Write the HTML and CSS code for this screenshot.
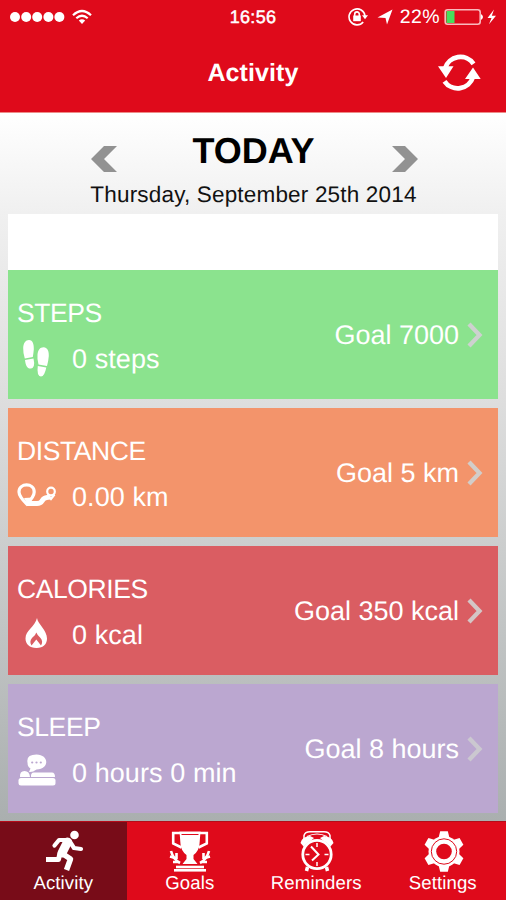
FILE: index.html
```html
<!DOCTYPE html>
<html lang="en">
<head>
<meta charset="utf-8">
<title>Activity</title>
<link rel="stylesheet" href="styles.css">
</head>
<body>
<div class="app">
  <header class="header">
    <div class="status">
      <div class="status-side">
        <svg width="84" height="20" viewBox="0 0 84 20" fill="#fff">
          <circle cx="15" cy="10" r="5"/><circle cx="26.2" cy="10" r="5"/><circle cx="37.2" cy="10" r="5"/><circle cx="48.4" cy="10" r="5"/><circle cx="59.4" cy="10" r="5"/>
        </svg>
        <svg class="wifi" width="20" height="16" viewBox="0 0 20 16" fill="none" stroke="#fff" stroke-width="2.2">
          <path d="M1 6.2Q10 -2.2 19 6.2M4.3 9.3Q10 4.2 15.7 9.3"/><path d="M6.8 11.6Q10 9 13.2 11.6L10 15Z" fill="#fff" stroke="none"/>
        </svg>
      </div>
      <span class="time">16:56</span>
      <div class="status-side right">
        <svg width="20" height="20" viewBox="0 0 20 20" fill="none" stroke="#fff" stroke-width="1.6">
          <path d="M15.2 15A8 8 0 1 1 17 9"/><path d="M14 8.3h6l-3 4z" fill="#fff" stroke="none"/><rect x="5.2" y="8.5" width="7.6" height="5.7" fill="#fff" stroke="none"/><path d="M6.7 9V7.2a2.3 2.3 0 0 1 4.6 0V9"/>
        </svg>
        <svg class="locate" width="16" height="16" viewBox="0 0 16 16" fill="#fff"><path d="M15.5 .5 10 15.5 8.5 9 .5 8.5Z"/></svg>
        <span class="percent">22%</span>
        <svg class="battery" width="54" height="18" viewBox="0 0 54 18">
          <rect x="1.2" y="1.7" width="35" height="14.5" rx="2.5" fill="none" stroke="#f9b9bd" stroke-width="1.6"/>
          <rect x="2.5" y="3" width="8" height="12" fill="#46df5c"/><path d="M37 6q4 3 0 6z" fill="#fff"/>
          <path d="M50 1.5 43.5 10h4L45 16.3 52 7.7h-4.2z" fill="#fff"/>
        </svg>
      </div>
    </div>
    <div class="navbar">
      <h1 class="title">Activity</h1>
      <svg class="refresh" width="44" height="40" viewBox="0 0 44 40">
        <path d="M36.5 10.8A16 16 0 0 0 8 15.5M7.5 28.3A16 16 0 0 0 36 24" fill="none" stroke="#fff" stroke-width="4.7"/>
        <path d="M1 13.2h15.5L9 25zM28 26h15.7L36 14.5z" fill="#fff"/>
      </svg>
    </div>
  </header>

  <main class="content">
    <section class="day">
      <svg class="arrow" width="26" height="26" viewBox="0 0 26 26"><path d="M13 0h13L13 13l13 13H13L0 13z" fill="#929292"/></svg>
      <div class="today">TODAY</div>
      <svg class="arrow" width="26" height="26" viewBox="0 0 26 26"><path d="M13 0H0l13 13L0 26h13l13-13z" fill="#929292"/></svg>
      <div class="date">Thursday, September 25th 2014</div>
    </section>
    <div class="blank"></div>
    <section class="cards">
      <article class="card steps">
        <div>
          <h2 class="name">STEPS</h2>
          <div class="reading">
            <svg width="40" height="40" viewBox="0 0 40 40" fill="#fff">
              <path d="M12 1C16 1 17 6 16.8 10.5Q16.5 14 15.8 18L7.8 19.5Q6 14 6.2 9C6.4 4 8.5 1 12 1ZM8 21l8.500-1.500Q18.500 28.500 14 29.500C10.500 30 8.500 26.500 8 21Z"/>
              <path d="M26.5 8.2C31 8.500 32 13 31.8 17Q31.5 21.5 30 27L21.5 25.5Q20 20 20.5 15.5C21 11 23 8.2 26.5 8.2ZM20.8 27l8.500 1.500Q27.500 37.500 24 37.500 19.500 37 20.800 27Z"/>
            </svg>
            <span>0 steps</span>
          </div>
        </div>
        <div class="goal">Goal 7000<svg width="16" height="26" viewBox="0 0 16 26"><path d="M2 2 12.5 13 2 24" fill="none" stroke="#cdd1cf" stroke-width="4.3"/></svg></div>
      </article>
      <article class="card distance">
        <div>
          <h2 class="name">DISTANCE</h2>
          <div class="reading">
            <svg width="40" height="40" viewBox="0 0 40 40" fill="none" stroke="#fff">
              <path d="M9.8 27Q2 19.500 2 15C2 5.500 17.200 5.500 17.200 15Q17.200 19.500 9.800 27Z" stroke-width="3.2"/>
              <path d="M7 21 11 28 16 20.500Z" fill="#fff" stroke="none"/>
              <path d="M10 26.500H20Q23.500 26.500 25 24L26.500 22Q28 20.500 33 20" stroke-width="5"/>
              <circle cx="34" cy="14.500" r="3.800" stroke-width="2.2"/><path d="M30.500 17.500 34 22l3.500-4.500" stroke-width="2.200"/>
            </svg>
            <span>0.00 km</span>
          </div>
        </div>
        <div class="goal">Goal 5 km<svg width="16" height="26" viewBox="0 0 16 26"><path d="M2 2 12.5 13 2 24" fill="none" stroke="#d2cdc9" stroke-width="4.3"/></svg></div>
      </article>
      <article class="card calories">
        <div>
          <h2 class="name">CALORIES</h2>
          <div class="reading">
            <svg width="40" height="40" viewBox="0 0 40 40">
              <path d="M20 3C21 9.500 30 15 30 23.500 30 29 26.500 33 19.500 33S8.500 29 8.500 23.500C8.500 15 18 12 20 3Z" fill="#fff"/>
              <path d="M19.300 17.500Q20.500 20.500 23.500 23 26.500 26.500 24 30.500L19.300 24.500 14.500 30.500Q12 26.500 15 23 18.500 20.500 19.300 17.500Z" fill="#da5d62"/>
            </svg>
            <span>0 kcal</span>
          </div>
        </div>
        <div class="goal">Goal 350 kcal<svg width="16" height="26" viewBox="0 0 16 26"><path d="M2 2 12.5 13 2 24" fill="none" stroke="#d4c6c6" stroke-width="4.3"/></svg></div>
      </article>
      <article class="card sleep">
        <div>
          <h2 class="name">SLEEP</h2>
          <div class="reading">
            <svg width="40" height="40" viewBox="0 1.500 40 40" fill="#fff">
              <path d="M10.500 11Q9 3 19.500 3C32 3 33 17.500 19.500 18Q15.500 21 12 20.500L13.500 17Q10.500 15.500 10.500 11Z"/>
              <path d="M3 25.500Q2.500 19.500 7.500 19.500 12.500 19.500 13 25.500zM14 25.500Q13.500 21 17 21H35Q38 21 38 25.500z"/>
              <rect x="1.500" y="26.500" width="37" height="7.500" rx="2.500"/>
              <g fill="#bba7d0"><circle cx="15.200" cy="11" r="1.100"/><circle cx="19.500" cy="11" r="1.100"/><circle cx="23.800" cy="11" r="1.100"/></g>
            </svg>
            <span>0 hours 0 min</span>
          </div>
        </div>
        <div class="goal">Goal 8 hours<svg width="16" height="26" viewBox="0 0 16 26"><path d="M2 2 12.5 13 2 24" fill="none" stroke="#cbc8d0" stroke-width="4.3"/></svg></div>
      </article>
    </section>
  </main>

  <nav class="tabs">
    <a class="tab active">
      <svg width="44" height="44" viewBox="-1.5 0 44 44" fill="none" stroke="#fff" stroke-linejoin="round">
        <circle cx="32" cy="6" r="4.3" fill="#fff" stroke="none"/>
        <path d="M12 16.5 16.5 11 24.5 11" stroke-width="4.2" stroke-linecap="round"/>
        <path d="M25 13 19.5 24" stroke-width="9" stroke-linecap="round"/>
        <path d="M27 12 31.5 19 38.500 20" stroke-width="4.200" stroke-linecap="round"/>
        <path d="M17.500 24 16 30.500H3.500" stroke-width="5"/>
        <path d="M20.500 25 28 30 24 41" stroke-width="5.500"/>
      </svg>
      <span>Activity</span>
    </a>
    <a class="tab">
      <svg width="44" height="44" viewBox="0 0 44 44" fill="none" stroke="#fff">
        <path d="M11.500 2.500H32.500L31.500 15Q31 22 25.500 26V30L29.500 35H14.500L18.500 30V26Q13 22 12.500 15Z" fill="#fff" stroke="none"/>
        <path d="M13.500 5.500H30.500" stroke="#df0a1b" stroke-width="1"/>
        <path d="M12 4H5.200V14.500L13.500 18.500M32 4h6.800V14.500L30.500 18.500" stroke-width="2.600"/>
        <path d="M8 38H36" stroke-width="2.600"/><path d="M6 41.300H38" stroke-width="2.600"/>
        <path d="M3 22Q5 30 12 34M41 22Q39 30 32 34" stroke-width="2.600"/>
        <path d="M2 27.500 7 29M5 33 10 33M8.500 24 8.500 30M42 27.500 37 29M39 33 34 33M35.500 24V30" stroke-width="2.600"/>
      </svg>
      <span>Goals</span>
    </a>
    <a class="tab">
      <svg width="44" height="44" viewBox="-1 0 44 44" fill="none" stroke="#fff">
        <path d="M9 10V6.500Q10 2.800 15 2.800H29Q34 2.800 35 6.500V10" stroke-width="1.500"/><path d="M12 7.500Q22 2.500 32 7.500" stroke-width="1.200"/>
        <path d="M5.500 14Q6.500 8 15 7L19 9 9 18zM38.500 14Q37.500 8 29 7L25 9 35 18z" fill="#fff" stroke="none"/>
        <circle cx="22" cy="26" r="15.500" fill="#df0a1b" stroke="none"/>
        <circle cx="22" cy="25.500" r="14.200" stroke-width="2.800"/>
        <path d="M22 14V18M22 33v4M10.500 25.500h4M29.500 25.500H33.500" stroke-width="1.500"/>
        <path d="M16 17.500 23.500 25.500 17 31.500" stroke-width="2"/>
        <path d="M12.500 38 11.500 42M31.500 38l1 4" stroke-width="3.500"/>
      </svg>
      <span>Reminders</span>
    </a>
    <a class="tab">
      <svg width="44" height="44" viewBox="-1 0 44 44">
        <g fill="#fff"><circle cx="22" cy="22.500" r="15.500"/>
          <path id="tooth" d="M16.500 9 18.200 2.300H25.800L27.500 9z"/>
          <use href="#tooth" transform="rotate(60 22 22.500)"/><use href="#tooth" transform="rotate(120 22 22.500)"/><use href="#tooth" transform="rotate(180 22 22.500)"/><use href="#tooth" transform="rotate(240 22 22.500)"/><use href="#tooth" transform="rotate(300 22 22.500)"/></g>
        <circle cx="22" cy="22.500" r="12.700" fill="none" stroke="#df0a1b" stroke-width="1"/>
        <circle cx="22" cy="22.500" r="7.800" fill="#df0a1b"/>
      </svg>
      <span>Settings</span>
    </a>
  </nav>
</div>
</body>
</html>
```
FILE: styles.css
```css
* { box-sizing: border-box; }
body {
  margin: 0;
  font-family: "Liberation Sans", Arial, sans-serif;
  color: #fff;
  text-rendering: geometricPrecision;
}
svg { display: block; flex: none; }
.app {
  display: flex;
  flex-direction: column;
  width: 506px;
  height: 900px;
  overflow: hidden;
}
.header { height: 113px; background: #df0a1b; border-bottom: 1px solid #ed8c88; }
.status {
  display: grid;
  grid-template-columns: 1fr auto 1fr;
  align-items: center;
  height: 34px;
  padding-right: 8px;
}
.status-side { display: flex; align-items: center; }
.wifi { margin-left: -12px; }
.right { justify-content: flex-end; }
.time { font-size: 18px; letter-spacing: .3px; -webkit-text-stroke: .5px #fff; padding-left: 8px; }
.locate { margin: 0 7px 0 9px; }
.percent { font-size: 19.5px; letter-spacing: .4px; }
.battery { margin-left: 4px; }
.navbar {
  display: grid;
  grid-template-columns: 1fr auto 1fr;
  align-items: center;
  height: 77px;
}
.title { grid-column: 2; margin: 0; font-size: 25px; line-height: 30px; letter-spacing: .1px; }
.refresh { grid-column: 3; justify-self: end; margin-right: 25px; }
.content {
  flex: 1;
  padding: 0 8px;
  background: linear-gradient(#fff, #f0f0f0 14%, #dedede 40%, #c1c4c4 73%, #aaafaf);
}
.day {
  display: grid;
  grid-template-columns: 26px 1fr 26px;
  grid-template-rows: 68px 33px;
  padding: 0 80px 0 83px;
}
.arrow { margin-top: 33px; }
.today { font-size: 36px; font-weight: bold; line-height: 41px; padding: 17px 2px 0 0; text-align: center; color: #000; }
.date {
  grid-column: 1 / -1;
  margin: 0 -10px;
  padding-right: 2px;
  font-size: 22.5px;
  line-height: 27px;
  letter-spacing: .18px;
  text-align: center;
  white-space: nowrap;
  color: #111;
}
.blank { height: 56px; background: #fff; }
.cards { display: flex; flex-direction: column; gap: 9px; }
.card {
  display: flex;
  justify-content: space-between;
  height: 129px;
  padding: 28px 15px 0 9px;
  font-size: 27px;
  line-height: 30px;
}
.steps { background: #8be38e; }
.distance { background: #f3946b; }
.calories { background: #da5d62; }
.sleep { background: #bba7d0; }
.name { margin: 0; font: inherit; font-size: 26.5px; letter-spacing: -.4px; }
.reading { display: flex; align-items: center; gap: 15px; height: 40px; margin-top: 11px; }
.reading span { letter-spacing: .08px; }
.goal { display: flex; align-items: center; gap: 8px; height: 30px; margin-top: 22px; }
.tabs { display: grid; grid-template-columns: repeat(4, 1fr); height: 79px; background: #df0a1b; border-top: 1px solid #b60c19; }
.tab {
  display: flex;
  flex-direction: column;
  align-items: center;
  padding-top: 7px;
  font-size: 18.6px;
  line-height: 19px;
  letter-spacing: .1px;
}
.active { background: #780c18; }
```
